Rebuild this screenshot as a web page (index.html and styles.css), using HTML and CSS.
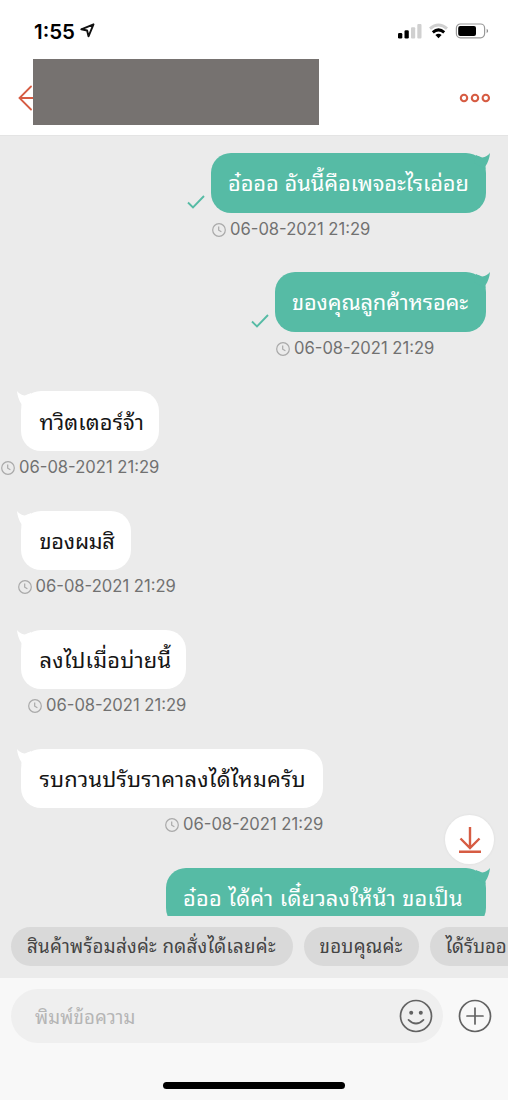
FILE: index.html
```html
<!DOCTYPE html>
<html lang="th">
<head>
<meta charset="utf-8">
<title>Chat</title>
<link rel="stylesheet" href="styles.css">
</head>
<body>
<svg width="0" height="0" class="defs">
  <symbol id="clock" viewBox="0 0 14 14"><circle cx="7" cy="7" r="6.3"/><path d="M6.7 3.4v3.8l2.7 1.5"/></symbol>
  <symbol id="check" viewBox="0 0 18 14"><path d="M1 7.5l5 5L17 1"/></symbol>
  <symbol id="tail" viewBox="0 0 16 16"><path d="M2 2C4 3 6.500 3.800 8.300 4.600C11.500 4 14 2.500 16 0C15.500 5 14 9.500 11.600 13L11.500 16L0 10Z"/></symbol>
</svg>
<div class="screen">
  <header class="top">
    <div class="status">
      <span class="clock-time">1:55</span>
      <svg class="location" width="15" height="15" viewBox="0 0 15 15"><path d="M13.500 1.300L1.300 6.300L7.100 7.500L8.500 13.300Z"/></svg>
      <svg class="signals" width="94" height="18" viewBox="0 0 94 18">
        <rect x="0" y="10" width="4.300" height="5.600" rx="1.300"/>
        <rect x="6.500" y="7.300" width="4.300" height="8.300" rx="1.300"/>
        <rect class="off" x="13" y="4.200" width="4.200" height="11.400" rx="1"/>
        <rect class="off" x="19.300" y="1" width="4.200" height="14.600" rx="1"/>
        <path class="wave off-wave" d="M32 5.700Q40.500-1.700 49 5.700"/>
        <path class="wave" d="M34.800 9.300Q40.500 4.500 46.200 9.300"/>
        <path d="M37.400 12Q40.500 9.500 43.600 12L40.500 15.300Z"/>
        <rect class="battery" x="58.400" y="1" width="28.200" height="13.800" rx="4"/>
        <rect x="60.200" y="3" width="17.800" height="10" rx="2"/>
        <path class="cap" d="M88.700 5.700Q91.500 7.900 88.700 10.200Z"/>
      </svg>
    </div>
    <div class="nav">
      <svg class="back" width="15" height="26" viewBox="0 0 15 26"><path d="M13 1.500L1.500 13L13 24.500M1.500 13H15"/></svg>
      <div class="contact"></div>
      <svg class="more" width="32" height="10" viewBox="0 0 32 10"><circle cx="5" cy="5" r="3.200"/><circle cx="16" cy="5" r="3.200"/><circle cx="26.800" cy="5" r="3.200"/></svg>
    </div>
  </header>

  <main class="chat">
    <div class="msg sent">
      <div class="line"><svg class="check"><use href="#check"/></svg><div class="bubble w1"><span>อ๋อออ อันนี้คือเพจอะไรเอ่อย</span><svg class="tail"><use href="#tail"/></svg></div></div>
      <div class="meta m1"><svg><use href="#clock"/></svg><time>06-08-2021 21:29</time></div>
    </div>
    <div class="msg sent">
      <div class="line"><svg class="check"><use href="#check"/></svg><div class="bubble w2"><span>ของคุณลูกค้าหรอคะ</span><svg class="tail"><use href="#tail"/></svg></div></div>
      <div class="meta m2"><svg><use href="#clock"/></svg><time>06-08-2021 21:29</time></div>
    </div>
    <div class="msg received">
      <div class="line"><div class="bubble w3"><span>ทวิตเตอร์จ้า</span><svg class="tail"><use href="#tail"/></svg></div></div>
      <div class="meta m3"><svg><use href="#clock"/></svg><time>06-08-2021 21:29</time></div>
    </div>
    <div class="msg received">
      <div class="line"><div class="bubble w4"><span>ของผมสิ</span><svg class="tail"><use href="#tail"/></svg></div></div>
      <div class="meta m4"><svg><use href="#clock"/></svg><time>06-08-2021 21:29</time></div>
    </div>
    <div class="msg received">
      <div class="line"><div class="bubble w5"><span>ลงไปเมื่อบ่ายนี้</span><svg class="tail"><use href="#tail"/></svg></div></div>
      <div class="meta m5"><svg><use href="#clock"/></svg><time>06-08-2021 21:29</time></div>
    </div>
    <div class="msg received">
      <div class="line"><div class="bubble w6"><span>รบกวนปรับราคาลงได้ไหมครับ</span><svg class="tail"><use href="#tail"/></svg></div></div>
      <div class="meta m6"><svg><use href="#clock"/></svg><time>06-08-2021 21:29</time></div>
    </div>
    <div class="msg sent">
      <div class="line"><div class="bubble w7"><span>อ๋ออ ได้ค่า เดี๋ยวลงให้น้า ขอเป็น</span><svg class="tail"><use href="#tail"/></svg></div></div>
    </div>
    <button class="jump"><svg width="24" height="28" viewBox="0 0 24 28"><path d="M12 1v21M2.500 12.500L12 22L21.500 12.500M1 25.800H23"/></svg></button>
  </main>

  <div class="replies">
    <div class="chip c1"><span>สินค้าพร้อมส่งค่ะ กดสั่งได้เลยค่ะ</span></div>
    <div class="chip c2"><span>ขอบคุณค่ะ</span></div>
    <div class="chip c3"><span>ได้รับออ</span></div>
  </div>

  <footer class="composer">
    <div class="row">
      <div class="input"><span>พิมพ์ข้อความ</span>
        <svg width="34" height="34" viewBox="0 0 34 34"><circle cx="17" cy="17" r="15.500"/><path d="M9.500 20.800Q17 28.200 24.500 20.800"/><circle class="eye" cx="12.200" cy="13.700" r="2"/><circle class="eye" cx="21.800" cy="13.700" r="2"/></svg>
      </div>
      <svg class="plus" width="34" height="34" viewBox="0 0 34 34"><circle cx="17" cy="17" r="15.500"/><path d="M17 9v16M9 17h16"/></svg>
    </div>
    <div class="home"></div>
  </footer>
</div>
</body>
</html>
```
FILE: styles.css
```css
* { box-sizing: border-box; }
body { margin: 0; font-family: Inter, Thonburi, "Noto Sans Thai Looped", "Noto Looped Thai", Loma, Garuda, Umpush, Waree, "Noto Serif Thai", sans-serif; }
svg { display: block; flex: none; }
.defs { position: absolute; }
.screen { width: 508px; height: 1100px; display: flex; flex-direction: column; overflow: hidden; background: #ebebeb; }
.top { height: 136px; flex: none; background: #fff; border-bottom: 1px solid #e4e4e4; }
.status { height: 59px; padding: 23px 16px 0 34px; display: flex; align-items: flex-start; }
.clock-time { font-size: 20.500px; line-height: 18px; font-weight: 600; width: 42px; white-space: nowrap; }
.location { margin: 0 0 0 4px; fill: none; stroke: #111; stroke-width: 1.9; stroke-linejoin: round; }
.signals { margin-left: auto; }
.signals .off { fill: #d0d0d0; }
.signals .wave { fill: none; stroke: #000; stroke-width: 3; }
.signals .off-wave { stroke: #cfcfcf; }
.signals .battery { fill: none; stroke: #999; stroke-width: 1.2; }
.signals .cap { fill: #888; }
.nav { height: 66px; display: flex; align-items: center; padding: 0 17px 0 18px; }
.back, .more { fill: none; stroke: #d65c43; stroke-width: 1.8; stroke-linecap: round; }
.back { margin-top: 11px; }
.contact { width: 286px; height: 66px; background: #767270; }
.more { margin: 11px 0 0 auto; stroke-width: 2.1; }
.chat { position: relative; height: 779.500px; flex: none; padding-top: 17px; overflow: hidden; }
.msg { height: 119.200px; display: flex; flex-direction: column; }
.line { display: flex; }
.sent .line { justify-content: flex-end; padding-right: 22px; }
.received .line { padding-left: 21px; }
.bubble { position: relative; height: 59.500px; border-radius: 20px; display: flex; align-items: center; padding: 1px 0 0 18.500px; white-space: nowrap; font-size: 21.800px; line-height: 30px; }
.sent .bubble { background: #56bba5; color: #fff; padding-left: 17px; }
.received .bubble { background: #fff; color: #151515; }
.bubble .tail { position: absolute; top: 0; width: 16px; height: 16px; }
.sent .tail { right: -4px; fill: #56bba5; }
.received .tail { left: -4px; fill: #fff; transform: scaleX(-1); }
.check { width: 18px; height: 14px; margin: 42px 6px 0 0; fill: none; stroke: #56bba5; stroke-width: 1.9; }
.w1 { width: 275px; letter-spacing: -.09px; }
.w2 { width: 211px; letter-spacing: -.15px; }
.w3 { width: 138px; letter-spacing: .12px; }
.w4 { width: 110px; letter-spacing: -.25px; }
.w5 { width: 165px; letter-spacing: .22px; }
.w6 { width: 302px; letter-spacing: .22px; }
.w7 { width: 320px; letter-spacing: .22px; }
.meta { display: flex; align-items: center; height: 20px; margin-top: 6px; gap: 4px; color: #717171; font-size: 16.600px; line-height: 20px; white-space: nowrap; }
.meta svg { width: 14px; height: 14px; margin-top: 2px; fill: none; stroke: #a9a9a9; stroke-width: 1.2; }
.m1 { padding-left: 212px; }
.m2 { padding-left: 276px; }
.m3 { padding-left: 1px; }
.m4 { padding-left: 17.500px; }
.m5 { padding-left: 28px; }
.m6 { padding-left: 165px; }
.jump { position: absolute; right: 14px; top: 679px; width: 49px; height: 49px; border: 0; border-radius: 50%; padding: 0; background: #fff; box-shadow: 0 0 3px #0001; display: grid; place-items: center; }
.jump svg { fill: none; stroke: #d65c43; stroke-width: 2.4; }
.replies { height: 62px; flex: none; display: flex; gap: 11px; padding: 11px 0 0 11px; overflow: hidden; }
.chip { height: 39px; flex: none; border-radius: 20px; background: #d9d9d9; color: #444; display: flex; align-items: center; padding: 1px 0 0 16px; font-size: 18.700px; line-height: 28px; letter-spacing: .28px; white-space: nowrap; }
.c1 { width: 281.500px; }
.c2 { width: 115px; }
.c3 { width: 150px; letter-spacing: 0; }
.composer { flex: 1; background: #f8f8f8; display: flex; flex-direction: column; }
.row { display: flex; padding: 11px 16px 0 11px; align-items: center; justify-content: space-between; }
.input { width: 432px; height: 54px; border-radius: 27px; background: #efefef; padding: 0 10px 0 24px; display: flex; align-items: center; justify-content: space-between; color: #b5b5b5; font-size: 18.700px; letter-spacing: .1px; white-space: nowrap; }
.input span { padding-top: 0; }
.row svg { fill: none; stroke: #626262; stroke-width: 1.7; stroke-linecap: round; }
.row .eye { fill: #626262; stroke: none; }
.home { width: 182px; height: 7px; border-radius: 4px; background: #000; margin: 39px 0 0 163px; }
```
